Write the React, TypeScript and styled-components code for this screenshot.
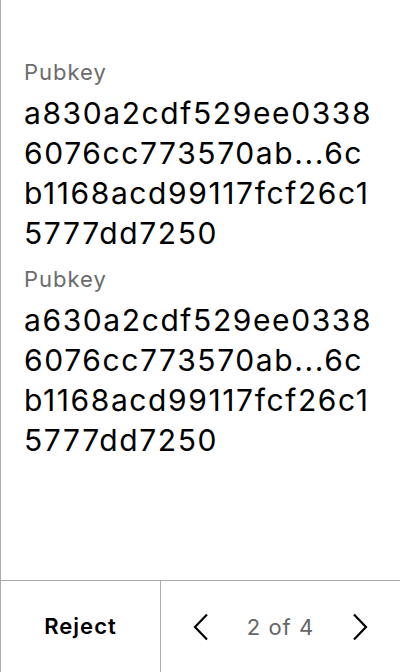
import React from "react";
import styled, { createGlobalStyle } from "styled-components";

const Global = createGlobalStyle`
  html, body { margin: 0; padding: 0; background: #fff; }
  body { font-family: Inter, "Noto Sans", sans-serif; }
`;

const Screen = styled.div`
  width: 400px;
  height: 672px;
  box-sizing: border-box;
  border-left: 1px solid #ababab;
  display: flex;
  flex-direction: column;
  background: #fff;
`;

const Content = styled.div`
  flex: 1;
  padding: 58px 0 0 23px;
  display: flex;
  flex-direction: column;
  gap: 12px;
`;

const Field = styled.div`
  display: flex;
  flex-direction: column;
`;

const Label = styled.div`
  font-size: 22px;
  line-height: 28px;
  letter-spacing: 1px;
  color: #6b6b6b;
  margin-bottom: 7px;
`;

const Value = styled.div`
  width: 358px;
  font-size: 30px;
  line-height: 40px;
  letter-spacing: 1.6px;
  color: #000;
  word-break: break-all;
`;

const Footer = styled.div`
  height: 92px;
  border-top: 1px solid #ababab;
  display: grid;
  grid-template-columns: 160px 1fr;
  box-sizing: border-box;
`;

const RejectButton = styled.button`
  border: none;
  border-right: 1px solid #ababab;
  background: none;
  font-family: Inter, "Noto Sans", sans-serif;
  font-size: 22px;
  font-weight: 600;
  letter-spacing: 1px;
  color: #000;
  padding: 0 0 2px 0;
`;

const Pager = styled.div`
  display: grid;
  grid-template-columns: repeat(3, 1fr);
  align-items: center;
  justify-items: center;
`;

const NavButton = styled.button`
  border: none;
  background: none;
  padding: 0;
  display: flex;
  align-items: center;
  justify-content: center;
  width: 40px;
  height: 40px;
`;

const PageText = styled.span`
  font-size: 22px;
  letter-spacing: 1px;
  color: #666;
  white-space: nowrap;
`;

const Chevron = ({ dir }: { dir: "left" | "right" }) => (
  <svg width="16" height="28" viewBox="0 0 16 28" fill="none">
    <polyline
      points={dir === "left" ? "14,1.5 2,14 14,26.5" : "2,1.5 14,14 2,26.5"}
      stroke="#000"
      strokeWidth="2.2"
      fill="none"
    />
  </svg>
);

const keys = [
  "a830a2cdf529ee03386076cc773570ab...6cb1168acd99117fcf26c15777dd7250",
  "a630a2cdf529ee03386076cc773570ab...6cb1168acd99117fcf26c15777dd7250",
];

export default function App() {
  return (
    <>
      <Global />
      <Screen>
        <Content>
          {keys.map((k, i) => (
            <Field key={i}>
              <Label>Pubkey</Label>
              <Value>{k}</Value>
            </Field>
          ))}
        </Content>
        <Footer>
          <RejectButton>Reject</RejectButton>
          <Pager>
            <NavButton aria-label="Previous">
              <Chevron dir="left" />
            </NavButton>
            <PageText>2 of 4</PageText>
            <NavButton aria-label="Next">
              <Chevron dir="right" />
            </NavButton>
          </Pager>
        </Footer>
      </Screen>
    </>
  );
}
